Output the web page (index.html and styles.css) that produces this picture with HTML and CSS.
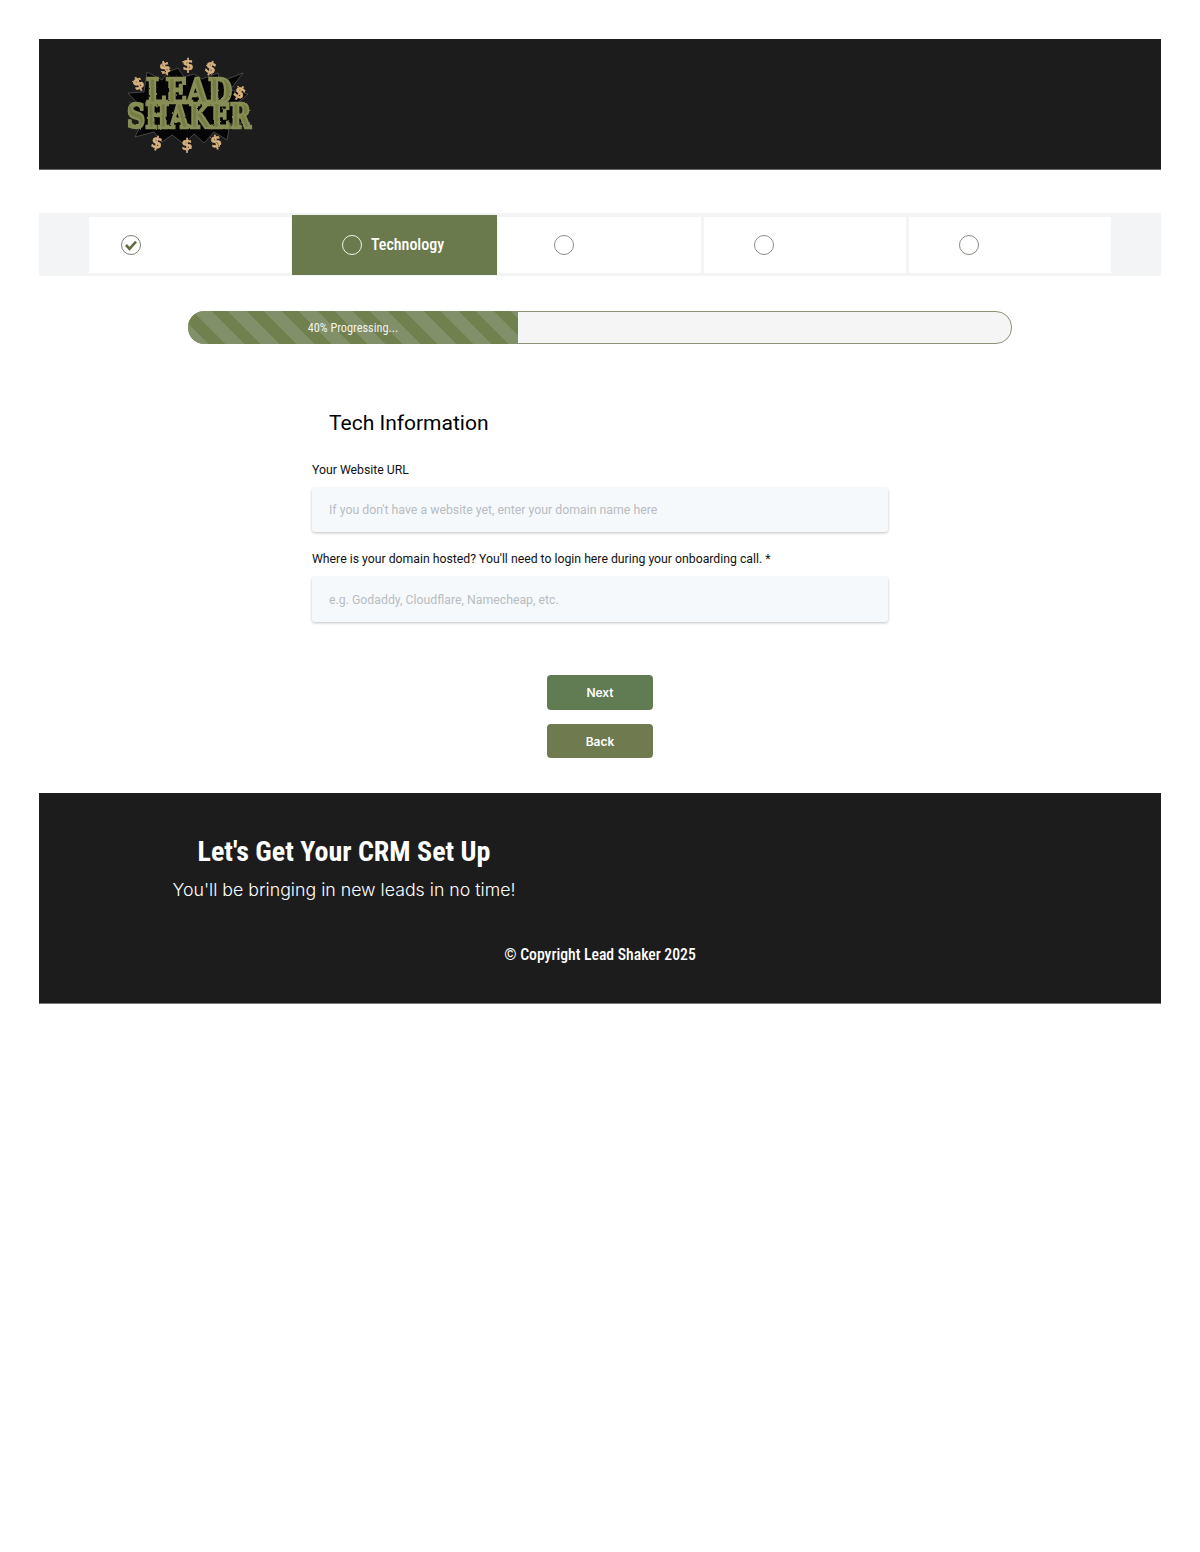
FILE: index.html
```html
<!DOCTYPE html>
<html lang="en">
  <head>
    <meta charset="UTF-8" />
    <meta name="viewport" content="width=device-width, initial-scale=1.0" />
    <title>Lead Shaker - Tech Information</title>
    <link rel="stylesheet" href="styles.css">
  </head>
  <body>
    <div class="container">
      <header class="header">
        <svg class="logo" viewBox="0 0 130 97" width="130" height="97">
          <defs>
            <filter id="rough" x="-5%" y="-10%" width="110%" height="120%">
              <feTurbulence type="fractalNoise" baseFrequency="0.25" numOctaves="2" seed="4" />
              <feDisplacementMap in="SourceGraphic" scale="2.2" />
              <feGaussianBlur stdDeviation="0.3" />
            </filter>
          </defs>
          <polygon class="burst" points="23,16 38,24 44,16 54,12 60,21 70,18 78,23 94,17 96,26 119,17 106,34 124,38 110,50 122,66 106,68 103,84 90,76 80,87 70,78 60,88 48,79 38,86 30,76 11,81 18,66 4,58 14,48 4,37 20,36" />
          <g filter="url(#rough)">
            <text class="logo-word" x="65" y="47" textLength="86" lengthAdjust="spacingAndGlyphs">LEAD</text>
            <text class="logo-word" x="65" y="72" textLength="124" lengthAdjust="spacingAndGlyphs">SHAKER</text>
            <text class="logo-dollar" x="41" y="17" transform="rotate(-18 41 11)">$</text>
            <text class="logo-dollar" x="64" y="14">$</text>
            <text class="logo-dollar" x="87" y="17" transform="rotate(18 87 11)">$</text>
            <text class="logo-dollar" x="14" y="33" transform="rotate(-25 14 27)">$</text>
            <text class="logo-dollar" x="116" y="42" transform="rotate(30 116 36)">$</text>
            <text class="logo-dollar" x="33" y="92" transform="rotate(12 33 86)">$</text>
            <text class="logo-dollar" x="63" y="94">$</text>
            <text class="logo-dollar" x="92" y="91" transform="rotate(-12 92 85)">$</text>
          </g>
        </svg>
      </header>

      <nav class="steps">
        <div class="step step-done">
          <svg class="step-icon" viewBox="0 0 20 20" width="20" height="20">
            <circle cx="10" cy="10" r="9.5" fill="none" stroke="#7c8270" />
            <path d="M5 10 8.5 13.8 15 6.6" fill="none" stroke="#5f6b45" stroke-width="2.6" />
          </svg>
        </div>
        <div class="step step-active">
          <span class="step-circle"></span>
          <span class="step-name">Technology</span>
        </div>
        <div class="step step-third"><span class="step-circle"></span></div>
        <div class="step step-rest"><span class="step-circle"></span></div>
        <div class="step step-rest"><span class="step-circle"></span></div>
      </nav>

      <div class="progress">
        <div class="progress-fill">40% Progressing...</div>
      </div>

      <form class="form">
        <h2 class="form-title">Tech Information</h2>
        <label class="field">
          <span class="field-label">Your Website URL</span>
          <input type="text" placeholder="If you don't have a website yet, enter your domain name here" />
        </label>
        <label class="field">
          <span class="field-label">Where is your domain hosted? You'll need to login here during your onboarding call. *</span>
          <input class="input-tall" type="text" placeholder="e.g. Godaddy, Cloudflare, Namecheap, etc." />
        </label>
        <div class="buttons">
          <button type="button" class="btn btn-next">Next</button>
          <button type="button" class="btn btn-back">Back</button>
        </div>
      </form>

      <footer class="footer">
        <div class="footer-intro">
          <h3>Let's Get Your CRM Set Up</h3>
          <p>You'll be bringing in new leads in no time!</p>
        </div>
        <p class="copyright">© Copyright Lead Shaker 2025</p>
      </footer>
    </div>
  </body>
</html>
```

FILE: styles.css
```css
body {
  font-family: "Inter", "Liberation Sans", sans-serif;
  background: #fff;
  margin: 0;
  padding: 39px;
  color: #111;
}

.container {
  width: 1122px;
}

.header {
  display: flex;
  align-items: center;
  height: 131px;
  padding-left: 85px;
  background: #1c1c1c;
  border-bottom: 1px solid #666;
  box-sizing: border-box;
}

.logo {
  display: block;
  overflow: visible;
}

.burst {
  fill: #050505;
  stroke: #6a6a6a;
  stroke-width: 0.6;
}

.logo-word {
  font-family: "DejaVu Serif", serif;
  font-weight: 700;
  font-size: 33px;
  text-anchor: middle;
  fill: #747c42;
  stroke: #878d54;
  stroke-width: 2.6;
}

.logo-dollar {
  font-family: "DejaVu Sans", sans-serif;
  font-weight: 700;
  font-size: 16px;
  text-anchor: middle;
  fill: #d8b27e;
  stroke: #d8b27e;
  stroke-width: 0.5;
}

.steps {
  display: flex;
  align-items: center;
  height: 63px;
  margin-top: 43px;
  padding: 0 50px;
  background: #f3f4f6;
  box-sizing: border-box;
}

.step {
  display: flex;
  align-items: center;
  height: 56px;
  background: #fff;
  box-sizing: border-box;
}

.step-done {
  width: 202px;
  margin-right: 1px;
  padding-left: 32px;
}

.step-active {
  width: 205px;
  height: 60px;
  margin-right: 1px;
  padding-left: 50px;
  background: #6b7a4d;
  color: #fff;
}

.step-third {
  width: 203px;
  padding-left: 56px;
}

.step-rest {
  width: 202px;
  margin-left: 3px;
  padding-left: 50px;
}

.step-icon {
  display: block;
}

.step-circle {
  width: 20px;
  height: 20px;
  border: 1px solid #8a8f84;
  border-radius: 50%;
  box-sizing: border-box;
}

.step-active .step-circle {
  border-color: #f1f2e6;
}

.step-name {
  margin-left: 9px;
  font-family: "Roboto", sans-serif;
  font-size: 16px;
  font-weight: 500;
  font-stretch: 75%;
}

.progress {
  width: 824px;
  height: 33px;
  margin: 35px auto 0;
  background: #f5f5f5;
  border: 1px solid #8d9178;
  border-radius: 16px;
  box-sizing: border-box;
}

.progress-fill {
  width: 330px;
  height: 33px;
  margin: -1px 0 0 -1px;
  border-radius: 16px 0 0 16px;
  background: repeating-linear-gradient(45deg, #71804f 0 1.6px, #82906a 1.6px 14.6px, #71804f 14.6px 25px);
  color: #f3f3ee;
  font-family: "Roboto", sans-serif;
  font-size: 12.3px;
  font-stretch: 75%;
  line-height: 34px;
  text-align: center;
}

.form {
  width: 576px;
  margin: 0 auto;
}

.form-title {
  margin: 66px 0 0 17px;
  font-family: "Roboto", sans-serif;
  font-size: 21px;
  font-weight: 400;
  line-height: 26px;
  color: #000;
}

.field {
  display: block;
  margin-top: 26px;
}

.field + .field {
  margin-top: 19px;
}

.field-label {
  display: block;
  margin-bottom: 10px;
  font-family: "Roboto", sans-serif;
  font-size: 12.25px;
  line-height: 16px;
}

.field input {
  display: block;
  width: 100%;
  height: 44px;
  padding: 0 17px;
  border: none;
  border-radius: 3px;
  outline: none;
  background: #f6f9fc;
  box-shadow: 0 1px 3px rgba(0, 0, 0, 0.25);
  box-sizing: border-box;
  font-family: "Roboto", sans-serif;
  font-size: 12.3px;
}

.field .input-tall {
  height: 45px;
}

.field input::placeholder {
  color: #b8bcc0;
  opacity: 1;
}

.buttons {
  display: flex;
  flex-direction: column;
  align-items: center;
  gap: 14px;
  margin-top: 53px;
}

.btn {
  width: 106px;
  height: 35px;
  border: none;
  border-radius: 4px;
  color: #fff;
  font-family: "Inter", sans-serif;
  font-size: 12px;
  font-weight: 600;
}

.btn-next {
  background: #617b52;
}

.btn-back {
  height: 34px;
  background: #6f7b4e;
}

.footer {
  height: 211px;
  margin-top: 35px;
  padding-top: 43px;
  background: #1c1c1c;
  border-bottom: 1px solid #777;
  box-sizing: border-box;
  color: #fff;
}

.footer-intro {
  width: 344px;
  margin-left: 133px;
  text-align: center;
}

.footer-intro h3 {
  margin: 0;
  font-family: "Roboto", sans-serif;
  font-size: 28px;
  font-weight: 700;
  font-stretch: 75%;
  line-height: 32px;
}

.footer-intro p {
  margin: 9px 0 0;
  font-size: 17.75px;
  font-weight: 300;
  line-height: 26px;
  white-space: nowrap;
}

.copyright {
  margin: 42px 0 0;
  font-family: "Roboto", sans-serif;
  font-size: 15.7px;
  font-weight: 500;
  font-stretch: 75%;
  line-height: 20px;
  text-align: center;
}
```
